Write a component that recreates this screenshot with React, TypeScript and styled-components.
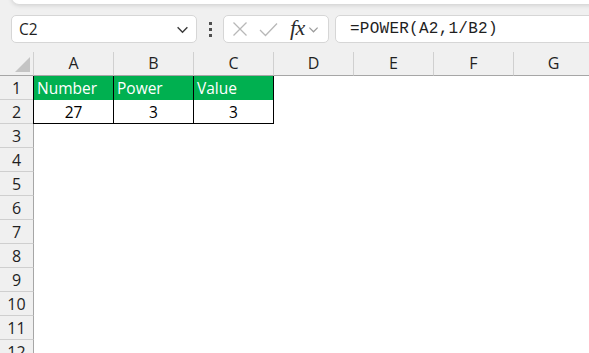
import React from "react";
import styled, { createGlobalStyle } from "styled-components";

const Global = createGlobalStyle`
  html, body { margin: 0; padding: 0; background: #ffffff; overflow: hidden; }
  body { font-family: "Open Sans", "Liberation Sans", sans-serif; }
  #root { width: 589px; height: 353px; overflow: hidden; }
`;

const Page = styled.div`
  width: 589px;
  height: 353px;
  display: flex;
  flex-direction: column;
  background: #ffffff;
  overflow: hidden;
`;

const Toolbar = styled.div`
  position: relative;
  height: 52px;
  flex: none;
  background: #f0f0f0;
  display: flex;
  align-items: flex-start;
  padding: 15px 0 0 11px;
  box-sizing: border-box;
`;

const TopStrip = styled.div`
  position: absolute;
  left: 12px;
  right: -10px;
  top: -6px;
  height: 10px;
  background: #ffffff;
  border-radius: 0 0 7px 7px;
  box-shadow: 0 1px 5px rgba(0, 0, 0, 0.16);
`;

const Box = styled.div<{ $w: number; $ml?: number }>`
  width: ${(p) => p.$w}px;
  margin-left: ${(p) => p.$ml ?? 0}px;
  height: 28px;
  box-sizing: border-box;
  background: #ffffff;
  border: 1px solid #d6d6d6;
  border-radius: 5px;
  display: flex;
  align-items: center;
  flex: none;
`;

const NameText = styled.span`
  flex: 1;
  padding-left: 7px;
  font-family: "Open Sans", sans-serif;
  font-size: 15.5px;
  color: #1f1f1f;
`;

const Dots = styled.div`
  width: 26px;
  height: 28px;
  display: flex;
  flex-direction: column;
  align-items: center;
  justify-content: center;
  gap: 3px;
  flex: none;
`;

const Dot = styled.span`
  width: 3px;
  height: 3px;
  background: #505050;
`;

const FormulaText = styled.span`
  padding-left: 14px;
  font-family: "Liberation Mono", monospace;
  font-size: 16px;
  letter-spacing: 0.25px;
  color: #1f1f1f;
  white-space: nowrap;
`;

const IconSlot = styled.span<{ $ml: number; $mr?: number }>`
  display: flex;
  margin-left: ${(p) => p.$ml}px;
  margin-right: ${(p) => p.$mr ?? 0}px;
`;

const Fx = styled.span`
  margin-left: 12px;
  font-family: "Liberation Serif", "DejaVu Serif", serif;
  font-style: italic;
  font-size: 22px;
  color: #2b2b2b;
  line-height: 1;
  letter-spacing: -0.5px;
  margin-top: -2px;
`;

const Grid = styled.div`
  display: grid;
  grid-template-columns: 34px repeat(7, 80px);
  grid-auto-rows: 24px;
  width: 594px;
`;

const Corner = styled.div`
  position: relative;
  background: #f0f0f0;
  border-bottom: 1px solid #a6a6a6;
  border-right: 1px solid #d0d0d0;
  box-sizing: border-box;
  overflow: hidden;
`;

const Tri = styled.div`
  position: absolute;
  right: 3px;
  bottom: 3px;
  width: 0;
  height: 0;
  border-left: 15px solid transparent;
  border-bottom: 15px solid #c4c4c4;
`;

const ColHead = styled.div`
  background: #f0f0f0;
  border-bottom: 1px solid #a6a6a6;
  border-right: 1px solid #d0d0d0;
  box-sizing: border-box;
  display: flex;
  align-items: center;
  justify-content: center;
  font-family: "Open Sans", sans-serif;
  font-size: 16px;
  color: #1f1f1f;
  padding-bottom: 1px;
`;

const RowHead = styled.div`
  background: #f0f0f0;
  border-bottom: 1px solid #cfcfcf;
  border-right: 1px solid #a6a6a6;
  box-sizing: border-box;
  display: flex;
  align-items: center;
  justify-content: center;
  font-family: "Open Sans", sans-serif;
  font-size: 16px;
  color: #1f1f1f;
`;

const Cell = styled.div<{ $kind: "head" | "data" | "empty"; $first?: boolean }>`
  box-sizing: border-box;
  display: flex;
  align-items: center;
  padding: 0 3px;
  font-family: "Open Sans", sans-serif;
  font-size: 15.5px;
  white-space: nowrap;
  background: ${(p) => (p.$kind === "head" ? "#00b050" : "#ffffff")};
  color: ${(p) => (p.$kind === "head" ? "#ffffff" : "#000000")};
  justify-content: ${(p) => (p.$kind === "data" ? "center" : "flex-start")};
  border-right: ${(p) => (p.$kind === "empty" ? "none" : "1px solid #000")};
  border-bottom: ${(p) => (p.$kind === "data" ? "1px solid #000" : "none")};
  box-shadow: ${(p) => (p.$first ? "-1px 0 0 #000" : "none")};
`;

const Chevron = ({ size = 12, color = "#3a3a3a" }: { size?: number; color?: string }) => (
  <svg width={size} height={size} viewBox="0 0 12 12">
    <path d="M1.5 4 L6 8.5 L10.5 4" fill="none" stroke={color} strokeWidth="1.3" />
  </svg>
);

const cols = ["A", "B", "C", "D", "E", "F", "G"];

export default function App() {
  const rows = Array.from({ length: 12 }, (_, i) => i + 1);
  const data: Record<number, { v: string; k: "head" | "data" }[]> = {
    1: [
      { v: "Number", k: "head" },
      { v: "Power", k: "head" },
      { v: "Value", k: "head" },
    ],
    2: [
      { v: "27", k: "data" },
      { v: "3", k: "data" },
      { v: "3", k: "data" },
    ],
  };
  return (
    <Page>
      <Global />
      <Toolbar>
        <TopStrip />
        <Box $w={186}>
          <NameText>C2</NameText>
          <IconSlot $ml={0} $mr={7}>
            <Chevron size={13} />
          </IconSlot>
        </Box>
        <Dots>
          <Dot />
          <Dot />
          <Dot />
        </Dots>
        <Box $w={106}>
          <IconSlot $ml={8}>
            <svg width="16" height="16" viewBox="0 0 16 16">
              <path d="M1.5 1.5 L14.5 14.5 M14.5 1.5 L1.5 14.5" stroke="#b8b8b8" strokeWidth="1.3" fill="none" />
            </svg>
          </IconSlot>
          <IconSlot $ml={11}>
            <svg width="19" height="15" viewBox="0 0 19 15">
              <path d="M1 8 L6.5 13.5 L18 1.5" stroke="#b8b8b8" strokeWidth="1.3" fill="none" />
            </svg>
          </IconSlot>
          <Fx>fx</Fx>
          <IconSlot $ml={3}>
            <Chevron size={11} color="#9a9a9a" />
          </IconSlot>
        </Box>
        <Box $w={270} $ml={6}>
          <FormulaText>=POWER(A2,1/B2)</FormulaText>
        </Box>
      </Toolbar>
      <Grid>
        <Corner>
          <Tri />
        </Corner>
        {cols.map((c) => (
          <ColHead key={c}>{c}</ColHead>
        ))}
        {rows.map((r) => (
          <React.Fragment key={r}>
            <RowHead>{r}</RowHead>
            {cols.map((c, ci) => {
              const d = data[r]?.[ci];
              return d ? (
                <Cell key={c} $kind={d.k} $first={ci === 0}>
                  {d.v}
                </Cell>
              ) : (
                <Cell key={c} $kind="empty" />
              );
            })}
          </React.Fragment>
        ))}
      </Grid>
    </Page>
  );
}
